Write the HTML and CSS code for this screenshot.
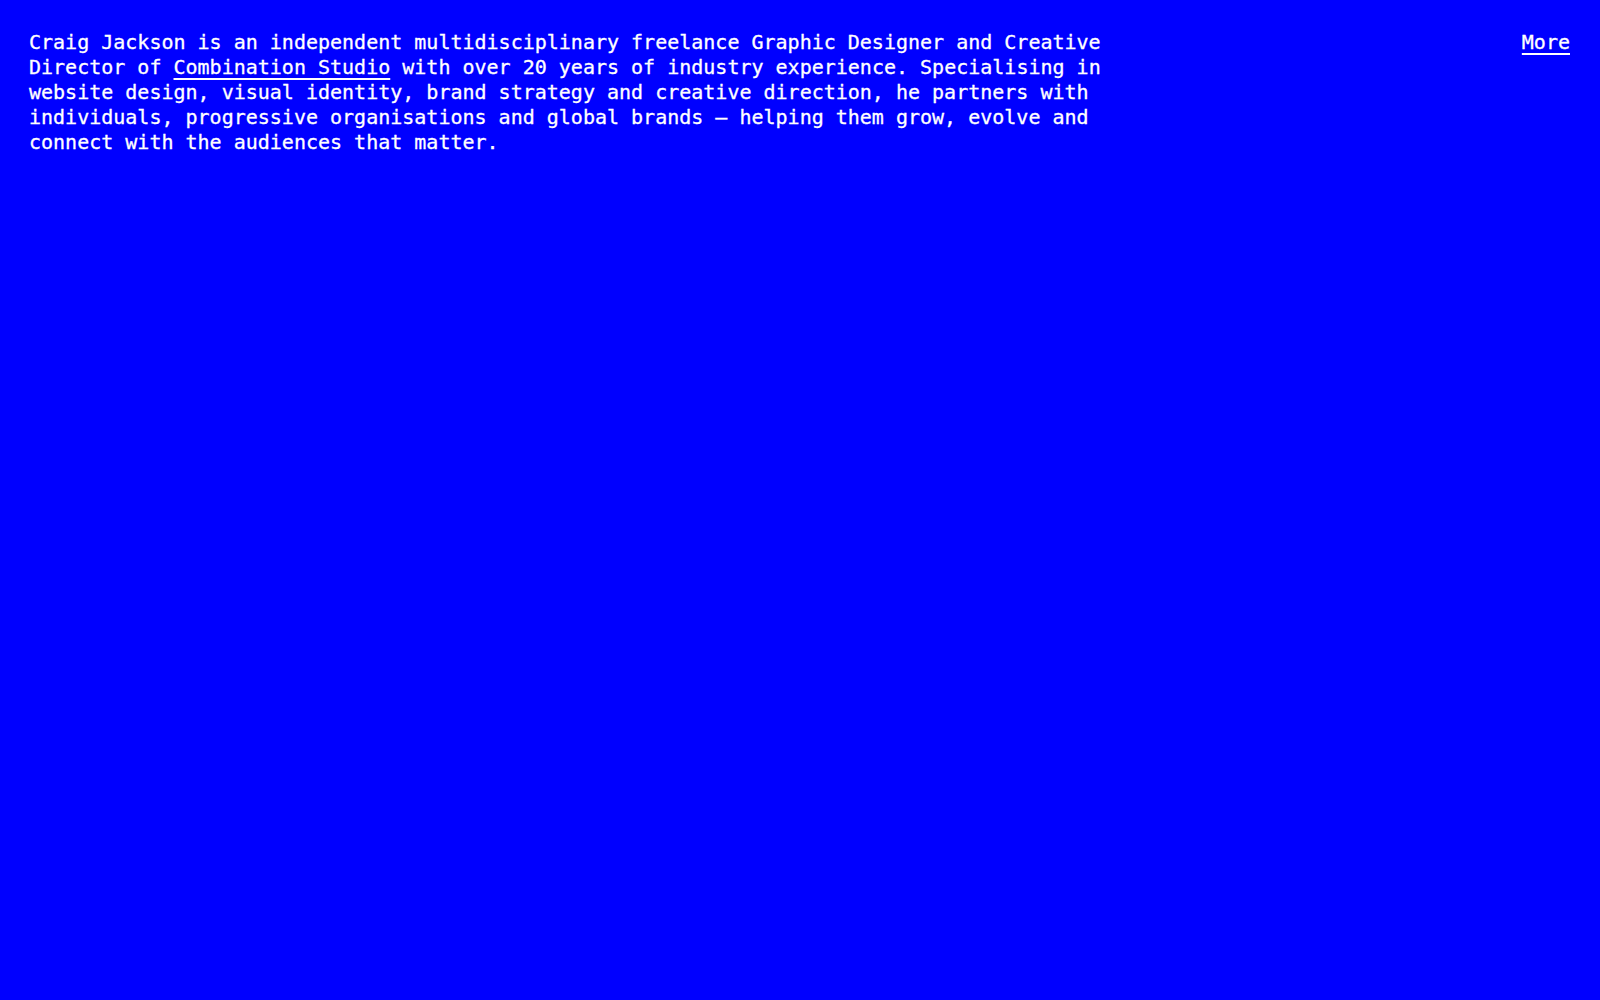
FILE: index.html
```html
<!DOCTYPE html>
<html lang="en">
<head>
    <meta charset="UTF-8">
    <meta name="viewport" content="width=device-width, initial-scale=1.0">
    <title>Craig Jackson</title>
    <link rel="stylesheet" href="styles.css">
</head>
<body>

    <header class="site-header">
        <!-- Intro -->
        <p class="intro">
            Craig Jackson is an independent multidisciplinary freelance Graphic Designer and Creative
            Director of <a href="#">Combination Studio</a> with over 20 years of industry experience. Specialising in
            website design, visual identity, brand strategy and creative direction, he partners with
            individuals, progressive organisations and global brands — helping them grow, evolve and
            connect with the audiences that matter.
        </p>

        <nav class="site-nav">
            <a href="#">More</a>
        </nav>
    </header>

</body>
</html>
```

FILE: styles.css
```css
/* Reset and base styles */
* {
    box-sizing: border-box;
    margin: 0;
    padding: 0;
}
body {
    font-family: "DejaVu Sans Mono", "Liberation Mono", monospace;
    font-size: 20px;
    line-height: 25px;
    background: #0000ff;
    color: #ffffff;
    min-height: 100vh;
}
a {
    color: #ffffff;
    text-decoration: underline;
    text-decoration-thickness: 2px;
    text-underline-offset: 4px;
}
/* Header */
.site-header {
    display: flex;
    justify-content: space-between;
    align-items: flex-start;
    padding: 30px 30px 0 29px;
}
.intro {
    max-width: 1110px;
    -webkit-text-stroke: 0.3px #ffffff;
}
.site-nav {
    -webkit-text-stroke: 0.3px #ffffff;
}
```
